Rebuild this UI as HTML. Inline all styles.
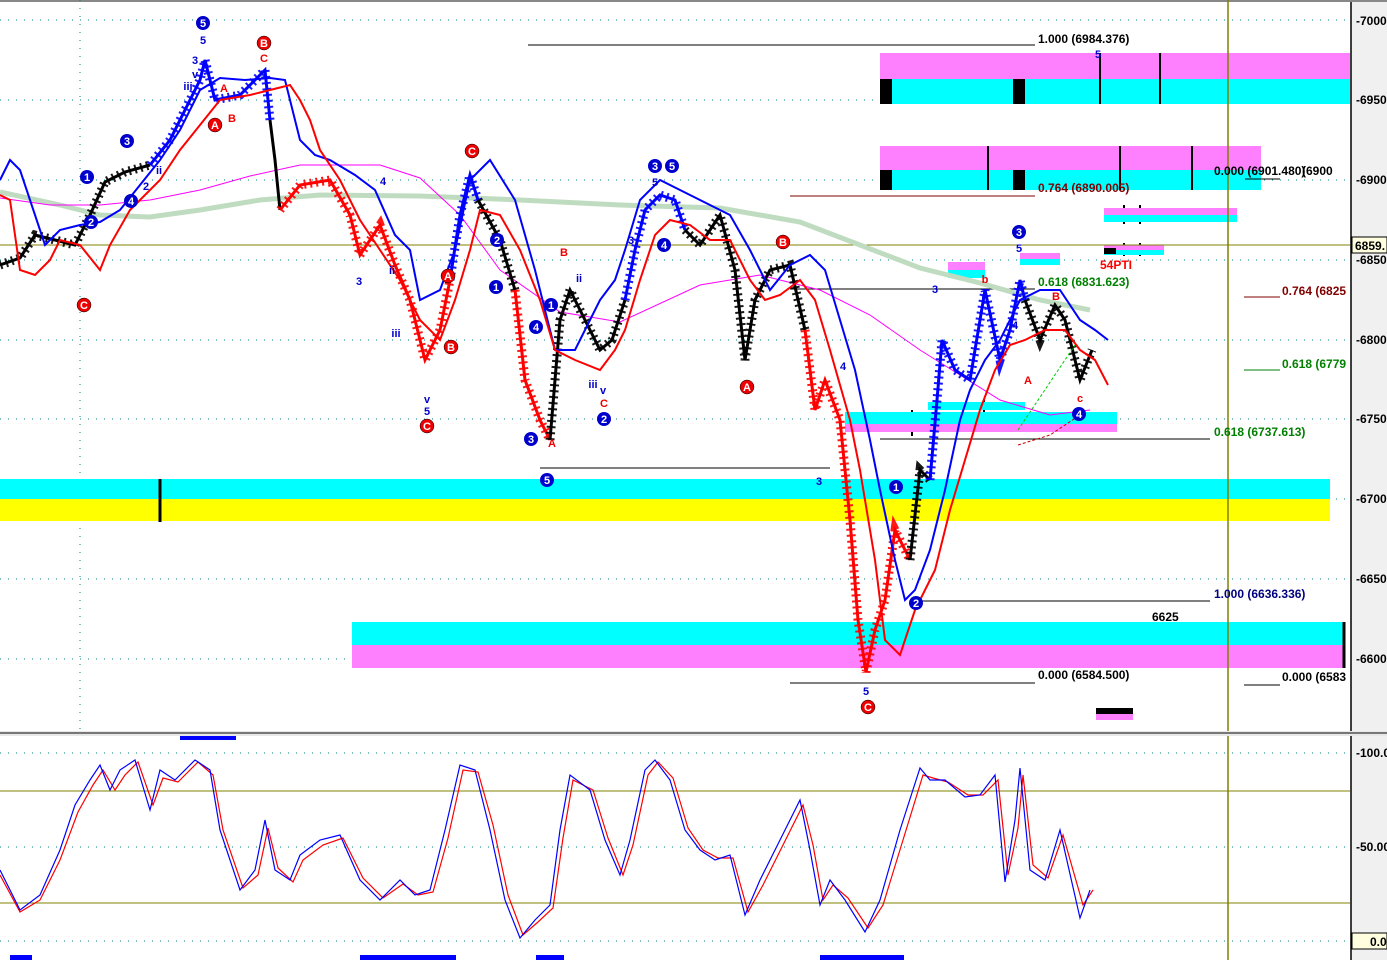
<!DOCTYPE html>
<html><head><meta charset="utf-8"><style>
html,body{margin:0;padding:0;background:#fff;overflow:hidden}
svg{display:block}
text{font-family:"Liberation Sans",sans-serif;font-weight:bold}
.pb{fill:none;stroke-width:3}
.pt{fill:none;stroke-width:9;stroke-dasharray:2,4;opacity:.9}
</style></head><body>
<svg width="1387" height="960" viewBox="0 0 1387 960" xmlns="http://www.w3.org/2000/svg">
<rect width="1387" height="960" fill="#fff"/>
<rect x="1351" y="0" width="36" height="960" fill="#f0f0f0"/>
<line x1="1351" y1="0" x2="1351" y2="960" stroke="#000" stroke-width="1.5"/>
<line x1="0" y1="1" x2="1387" y2="1" stroke="#888" stroke-width="2"/>
<g stroke="#008080" stroke-width="1" stroke-dasharray="1,7">
<line x1="0" y1="20" x2="1350" y2="20"/><line x1="0" y1="100" x2="1350" y2="100"/>
<line x1="0" y1="180" x2="1350" y2="180"/><line x1="0" y1="260" x2="1350" y2="260"/>
<line x1="0" y1="340" x2="1350" y2="340"/><line x1="0" y1="419" x2="1350" y2="419"/>
<line x1="0" y1="499" x2="1350" y2="499"/><line x1="0" y1="579" x2="1350" y2="579"/>
<line x1="0" y1="659" x2="1350" y2="659"/>
<line x1="80" y1="0" x2="80" y2="730"/>
<line x1="0" y1="753" x2="1350" y2="753"/><line x1="0" y1="847" x2="1350" y2="847"/><line x1="0" y1="941" x2="1350" y2="941"/>
</g>
<rect x="0" y="479" width="1330" height="20" fill="#00ffff"/>
<rect x="0" y="499" width="1330" height="22" fill="#ffff00"/>
<line x1="160" y1="479" x2="160" y2="522" stroke="#000" stroke-width="3"/>
<rect x="352" y="622" width="993" height="23" fill="#00ffff"/>
<rect x="352" y="645" width="993" height="23" fill="#ff80ff"/>
<line x1="1344" y1="622" x2="1344" y2="668" stroke="#000" stroke-width="3"/>
<rect x="880" y="53" width="470" height="26" fill="#ff80ff"/>
<rect x="880" y="79" width="470" height="25" fill="#00ffff"/>
<rect x="880" y="146" width="381" height="24" fill="#ff80ff"/>
<rect x="880" y="170" width="381" height="20" fill="#00ffff"/>
<rect x="880" y="79" width="12" height="25" fill="#000"/><rect x="1013" y="79" width="12" height="25" fill="#000"/>
<rect x="880" y="170" width="12" height="20" fill="#000"/><rect x="1013" y="170" width="12" height="20" fill="#000"/>
<g stroke="#000" stroke-width="2"><line x1="1100" y1="53" x2="1100" y2="104"/><line x1="1160" y1="53" x2="1160" y2="104"/>
<line x1="988" y1="146" x2="988" y2="190"/><line x1="1120" y1="146" x2="1120" y2="190"/><line x1="1192" y1="146" x2="1192" y2="190"/>
<line x1="1124" y1="205" x2="1124" y2="224"/><line x1="1140" y1="205" x2="1140" y2="224"/><line x1="1124" y1="243" x2="1124" y2="256"/><line x1="1140" y1="243" x2="1140" y2="256"/>
<line x1="912" y1="410" x2="912" y2="436"/><line x1="984" y1="400" x2="984" y2="414"/><line x1="1104" y1="414" x2="1104" y2="432"/></g>
<rect x="1104" y="208" width="133" height="7" fill="#ff80ff"/><rect x="1104" y="215" width="133" height="7" fill="#00ffff"/>
<rect x="1104" y="245" width="60" height="5" fill="#ff80ff"/><rect x="1104" y="250" width="60" height="5" fill="#00ffff"/>
<rect x="1104" y="248" width="12" height="6" fill="#000"/>
<rect x="948" y="262" width="37" height="8" fill="#ff80ff"/><rect x="948" y="270" width="37" height="8" fill="#00ffff"/>
<rect x="1020" y="253" width="40" height="6" fill="#ff80ff"/><rect x="1020" y="259" width="40" height="6" fill="#00ffff"/>
<rect x="928" y="402" width="97" height="8" fill="#00ffff"/>
<rect x="845" y="412" width="272" height="12" fill="#00ffff"/><rect x="845" y="424" width="272" height="8" fill="#ff80ff"/>
<rect x="1096" y="708" width="37" height="6" fill="#000"/><rect x="1096" y="714" width="37" height="6" fill="#ff80ff"/>
<g stroke="#000" stroke-width="1">
<line x1="528" y1="45" x2="1035" y2="45"/><line x1="790" y1="196" x2="1035" y2="196" stroke="#800000"/>
<line x1="790" y1="289" x2="1035" y2="289"/><line x1="880" y1="439" x2="1210" y2="439"/>
<line x1="540" y1="468" x2="830" y2="468"/><line x1="915" y1="601" x2="1210" y2="601"/>
<line x1="790" y1="683" x2="1035" y2="683"/><line x1="1244" y1="685" x2="1280" y2="685"/>
<line x1="1244" y1="297" x2="1280" y2="297" stroke="#800000"/><line x1="1244" y1="370" x2="1280" y2="370" stroke="#008000"/>
<line x1="1245" y1="179" x2="1280" y2="179"/>
</g>
<line x1="0" y1="245" x2="1350" y2="245" stroke="#808000" stroke-width="1"/>
<line x1="1228" y1="0" x2="1228" y2="960" stroke="#808000" stroke-width="1.5"/>
<polyline fill="none" stroke="#c0dcc0" stroke-width="5" points="0,192 60,205 100,215 150,217 200,210 260,200 320,195 420,196 520,200 620,205 720,208 800,222 860,245 920,268 980,283 1040,300 1090,310"/>
<polyline fill="none" stroke="#ff00ff" stroke-width="1" points="0,198 50,205 100,205 150,200 200,190 250,176 300,165 380,165 420,178 460,215 500,270 560,312 620,322 700,285 760,275 820,290 870,315 920,350 960,375 1000,400 1050,415 1090,410"/>
<!-- price -->
<g stroke="#000"><polyline class="pb" points="0,265 20,258 35,235 55,240 75,245 90,215 105,182 125,172 150,165"/><polyline class="pt" points="0,265 20,258 35,235 55,240 75,245 90,215 105,182 125,172 150,165"/></g>
<g stroke="#0000ff"><polyline class="pb" points="150,165 170,140 185,110 200,80 205,60 215,100 240,95 255,80 265,70 270,120"/><polyline class="pt" points="150,165 170,140 185,110 200,80 205,60 215,100 240,95 255,80 265,70 270,120"/></g>
<g stroke="#000"><polyline class="pb" points="270,120 275,160 280,210"/></g>
<g stroke="#ff0000"><polyline class="pb" points="280,210 300,185 330,180 350,215 360,255 380,225 395,265 410,300 425,360 440,330 450,280"/><polyline class="pt" points="280,210 300,185 330,180 350,215 360,255 380,225 395,265 410,300 425,360 440,330 450,280"/></g>
<g stroke="#0000ff"><polyline class="pb" points="450,280 460,215 470,175 478,200"/><polyline class="pt" points="450,280 460,215 470,175 478,200"/></g>
<g stroke="#000"><polyline class="pb" points="478,200 500,240 515,290"/><polyline class="pt" points="478,200 500,240 515,290"/></g>
<g stroke="#ff0000"><polyline class="pb" points="515,290 525,380 540,420 550,440"/><polyline class="pt" points="515,290 525,380 540,420 550,440"/></g>
<g stroke="#000"><polyline class="pb" points="550,440 560,320 570,290 585,320 600,350 612,340 625,300"/><polyline class="pt" points="550,440 560,320 570,290 585,320 600,350 612,340 625,300"/></g>
<g stroke="#0000ff"><polyline class="pb" points="625,300 635,250 645,210 660,195 675,200 685,230"/><polyline class="pt" points="625,300 635,250 645,210 660,195 675,200 685,230"/></g>
<g stroke="#000"><polyline class="pb" points="685,230 700,245 720,215 735,270 745,360 755,300 770,270 790,265 805,330"/><polyline class="pt" points="685,230 700,245 720,215 735,270 745,360 755,300 770,270 790,265 805,330"/></g>
<g stroke="#ff0000"><polyline class="pb" points="805,330 815,410 825,380 840,420 850,520 858,620 866,672 875,630 885,600 895,530 910,560"/><polyline class="pt" points="805,330 815,410 825,380 840,420 850,520 858,620 866,672 875,630 885,600 895,530 910,560"/></g>
<g stroke="#000"><polyline class="pb" points="910,560 920,470 930,480"/><polyline class="pt" points="910,560 920,470 930,480"/></g>
<g stroke="#0000ff"><polyline class="pb" points="930,480 937,400 942,340 955,370 970,380 985,290 1000,360 1010,330 1020,280 1025,300"/><polyline class="pt" points="930,480 937,400 942,340 955,370 970,380 985,290 1000,360 1010,330 1020,280 1025,300"/></g>
<g stroke="#000"><polyline class="pb" points="1025,300 1040,340 1055,305 1065,320 1080,380 1092,350"/><polyline class="pt" points="1025,300 1040,340 1055,305 1065,320 1080,380 1092,350"/></g>
<polyline fill="none" stroke="#0000ff" stroke-width="2" points="0,180 10,160 20,170 30,200 45,245 60,230 80,225 100,222 120,210 140,185 160,160 180,130 200,90 220,78 245,80 270,78 285,80 300,140 315,155 330,160 355,175 375,190 395,235 410,250 420,300 440,290 455,250 470,180 490,160 515,200 535,270 555,350 575,350 600,300 615,280 625,250 640,200 660,180 680,190 700,200 730,215 750,250 770,290 790,265 810,255 825,270 840,320 855,370 870,440 880,490 895,560 905,600 915,590 930,550 945,490 960,420 970,390 985,360 1000,340 1020,300 1040,290 1060,290 1080,320 1095,330 1108,340"/>
<polyline fill="none" stroke="#ff0000" stroke-width="2" points="0,195 10,200 20,270 35,275 50,260 60,240 80,245 100,270 110,245 130,210 160,180 180,150 200,125 220,100 250,95 270,90 290,85 300,100 310,120 320,150 340,180 360,220 380,250 400,280 420,320 440,340 455,300 470,250 480,210 500,215 520,250 540,300 555,350 575,360 600,370 615,350 625,330 640,280 655,235 670,220 690,225 710,240 730,240 750,280 765,300 780,295 800,280 815,300 830,350 850,420 860,470 875,560 885,640 900,655 915,610 935,570 950,510 965,460 980,410 995,370 1010,345 1025,340 1045,330 1065,330 1080,350 1095,360 1108,385"/>
<polyline fill="none" stroke="#00cc00" stroke-width="1" stroke-dasharray="3,2" points="1018,430 1075,345"/>
<polyline fill="none" stroke="#cc0000" stroke-width="1" stroke-dasharray="3,2" points="1018,445 1050,435 1080,415"/>
<g font-size="12">
<text x="1038" y="43" fill="#000">1.000 (6984.376)</text>
<text x="1214" y="175" fill="#000">0.000 (6901.480)</text><text x="1302" y="175" fill="#000">(6900</text>
<text x="1038" y="192" fill="#800000">0.764 (6890.005)</text>
<text x="1282" y="295" fill="#800000">0.764 (6825</text>
<text x="1038" y="286" fill="#008000">0.618 (6831.623)</text>
<text x="1282" y="368" fill="#008000">0.618 (6779</text>
<text x="1214" y="436" fill="#008000">0.618 (6737.613)</text>
<text x="1214" y="598" fill="#000080">1.000 (6636.336)</text>
<text x="1152" y="621" fill="#000">6625</text>
<text x="1038" y="679" fill="#000">0.000 (6584.500)</text>
<text x="1282" y="681" fill="#000">0.000 (6583</text>
<text x="1100" y="269" fill="#ff0000">54PTI</text>
</g>
<g font-size="12" fill="#000">
<text x="1356" y="25">-7000</text><text x="1356" y="104">-6950</text><text x="1356" y="184">-6900</text>
<text x="1356" y="264">-6850</text><text x="1356" y="344">-6800</text><text x="1356" y="423">-6750</text>
<text x="1356" y="503">-6700</text><text x="1356" y="583">-6650</text><text x="1356" y="663">-6600</text>
<text x="1356" y="757">-100.0</text><text x="1356" y="851">-50.00</text>
</g>
<rect x="1352" y="237" width="35" height="16" fill="#ffffe0" stroke="#000"/>
<text x="1355" y="250" font-size="12">6859.</text>
<rect x="1352" y="933" width="35" height="16" fill="#ffffe0" stroke="#000"/>
<text x="1370" y="946" font-size="12">0.0</text>
<g font-size="11" text-anchor="middle">
<g fill="#0000cc"><circle cx="203" cy="23" r="7"/><circle cx="127" cy="141" r="7"/><circle cx="87" cy="177" r="7"/><circle cx="131" cy="201" r="7"/><circle cx="91" cy="222" r="7"/><circle cx="655" cy="166" r="7"/><circle cx="672" cy="166" r="7"/><circle cx="497" cy="240" r="7"/><circle cx="664" cy="245" r="7"/><circle cx="496" cy="287" r="7"/><circle cx="551" cy="305" r="7"/><circle cx="536" cy="327" r="7"/><circle cx="531" cy="439" r="7"/><circle cx="547" cy="480" r="7"/><circle cx="604" cy="419" r="7"/><circle cx="1019" cy="232" r="7"/><circle cx="1079" cy="414" r="7"/><circle cx="896" cy="487" r="7"/><circle cx="916" cy="603" r="7"/></g>
<g fill="#fff"><text x="203" y="27">5</text><text x="127" y="145">3</text><text x="87" y="181">1</text><text x="131" y="205">4</text><text x="91" y="226">2</text><text x="655" y="170">3</text><text x="672" y="170">5</text><text x="497" y="244">2</text><text x="664" y="249">4</text><text x="496" y="291">1</text><text x="551" y="309">1</text><text x="536" y="331">4</text><text x="531" y="443">3</text><text x="547" y="484">5</text><text x="604" y="423">2</text><text x="1019" y="236">3</text><text x="1079" y="418">4</text><text x="896" y="491">1</text><text x="916" y="607">2</text></g>
<g fill="#ee0000" stroke="#000" stroke-width="0.5"><circle cx="264" cy="43" r="7"/><circle cx="215" cy="125" r="7"/><circle cx="84" cy="305" r="7"/><circle cx="472" cy="151" r="7"/><circle cx="448" cy="276" r="7"/><circle cx="451" cy="347" r="7"/><circle cx="427" cy="426" r="7"/><circle cx="783" cy="242" r="7"/><circle cx="747" cy="387" r="7"/><circle cx="868" cy="707" r="7"/></g>
<g fill="#fff"><text x="264" y="47">B</text><text x="215" y="129">A</text><text x="84" y="309">C</text><text x="472" y="155">C</text><text x="448" y="280">A</text><text x="451" y="351">B</text><text x="427" y="430">C</text><text x="783" y="246">B</text><text x="747" y="391">A</text><text x="868" y="711">C</text></g>
<g fill="#0000cc"><text x="203" y="44">5</text><text x="195" y="64">3</text><text x="195" y="78">v</text><text x="188" y="90">iii</text><text x="146" y="190">2</text><text x="159" y="174">ii</text><text x="359" y="285">3</text><text x="383" y="185">4</text><text x="392" y="274">ii</text><text x="396" y="337">iii</text><text x="427" y="403">v</text><text x="427" y="415">5</text><text x="579" y="282">ii</text><text x="593" y="388">iii</text><text x="603" y="394">v</text><text x="655" y="186">5</text><text x="631" y="244">3</text><text x="819" y="485">3</text><text x="866" y="695">5</text><text x="1019" y="252">5</text><text x="935" y="293">3</text><text x="1015" y="329">4</text><text x="843" y="370">4</text><text x="1098" y="58">5</text></g>
<g fill="#ee0000"><text x="264" y="62">C</text><text x="224" y="92">A</text><text x="232" y="122">B</text><text x="564" y="256">B</text><text x="604" y="407">C</text><text x="552" y="447">A</text><text x="1028" y="384">A</text><text x="1056" y="300">B</text><text x="1080" y="402">c</text><text x="985" y="283">b</text></g>
</g>
<rect x="0" y="731" width="1387" height="5" fill="#e8e8e8"/>
<line x1="0" y1="733" x2="1387" y2="733" stroke="#777" stroke-width="2"/>
<rect x="180" y="736" width="56" height="4" fill="#0000ff"/>
<line x1="0" y1="791" x2="1350" y2="791" stroke="#808000"/>
<line x1="0" y1="903" x2="1350" y2="903" stroke="#808000"/>
<rect x="10" y="955" width="22" height="5" fill="#0000ff"/><rect x="360" y="955" width="96" height="5" fill="#0000ff"/>
<rect x="536" y="955" width="28" height="5" fill="#0000ff"/><rect x="820" y="955" width="84" height="5" fill="#0000ff"/>
<polyline fill="none" stroke="#ff0000" stroke-width="1.2" points="0,875 20,912 40,900 60,860 78,812 93,785 103,770 115,790 125,775 138,762 153,805 163,778 178,782 198,762 213,775 223,830 243,888 258,875 268,828 278,868 293,882 303,860 323,845 343,838 363,878 383,898 403,884 418,895 433,892 448,838 463,770 478,772 493,825 508,895 523,935 538,922 553,908 563,838 573,780 593,790 608,838 623,875 633,845 648,775 658,762 673,778 688,828 703,850 718,858 733,858 748,912 763,885 783,845 803,805 813,845 823,900 833,885 848,898 868,928 883,905 903,840 923,775 933,778 948,782 968,795 983,795 998,780 1008,875 1018,828 1023,775 1033,865 1048,878 1063,835 1083,905 1093,890"/>
<polyline fill="none" stroke="#0000ff" stroke-width="1.2" points="0,870 20,910 40,895 60,850 75,805 90,780 100,765 110,790 120,770 135,760 150,810 160,770 175,780 195,760 210,770 220,830 240,890 255,870 265,820 275,870 290,880 300,855 320,840 340,835 360,880 380,900 400,880 415,895 430,890 445,830 460,765 475,770 490,830 505,900 520,938 535,920 550,905 560,830 570,775 590,790 605,840 620,875 630,840 645,770 655,760 670,780 685,830 700,850 715,860 730,855 745,915 760,880 780,840 800,800 810,850 820,905 830,880 845,900 865,932 880,900 900,830 920,768 930,780 945,780 965,797 980,795 995,775 1005,882 1015,820 1020,768 1030,870 1045,880 1060,830 1080,918 1090,890"/>
</svg>
</body></html>
